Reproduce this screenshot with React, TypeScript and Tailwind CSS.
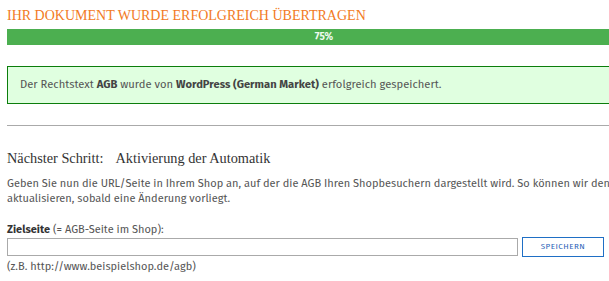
import React from "react";

const sans = "font-['Fira_Sans','Liberation_Sans',Arial,sans-serif]";
const slab = "font-['Liberation_Serif','DejaVu_Serif',serif]";

const App = () => {
  return (
    <div className={`w-[609px] h-[281px] overflow-hidden bg-white ${sans} text-[#555]`}>
      <div className="ml-[7px] w-[634px]">
        <h1 className={`${slab} pt-[8px] text-[14px] leading-[16px] text-[#f27a24]`}>
          IHR DOKUMENT WURDE ERFOLGREICH ÜBERTRAGEN
        </h1>
        <div className="mt-[5px] h-[16px] bg-[#4caf50] flex items-center justify-center">
          <span className="text-[10px] font-bold text-[#eefaee]">75%</span>
        </div>
        <div className="mt-[21px] h-[38px] border border-[#0b7d0b] bg-[#e0ffe0] flex items-center pl-[12px] text-[11.2px] text-[#555]">
          <span>
            Der Rechtstext <b className="text-[#444]">AGB</b> wurde von{" "}
            <b className="text-[#444]">WordPress (German Market)</b> erfolgreich gespeichert.
          </span>
        </div>
        <hr className="mt-[21px] border-0 border-t border-[#aaa]" />
        <h2 className={`${slab} mt-[24px] text-[14.3px] leading-[16px] text-[#333] flex gap-[12px]`}>
          <span>Nächster Schritt:</span>
          <span>Aktivierung der Automatik</span>
        </h2>
        <p className="mt-[10px] text-[11px] leading-[15px] text-[#555]">
          Geben Sie nun die URL/Seite in Ihrem Shop an, auf der die AGB Ihren Shopbesuchern dargestellt wird. So
          können wir den
          <br />
          aktualisieren, sobald eine Änderung vorliegt.
        </p>
        <label className="block mt-[16px] text-[11px] leading-[15px]">
          <b className="text-[#333]">Zielseite</b> (= AGB-Seite im Shop):
        </label>
        <div className="flex items-center gap-[4px]">
          <input
            type="text"
            className="w-[511px] h-[18px] border border-[#aaa] bg-white outline-none"
          />
          <button className="w-[82px] h-[20px] border border-[#1f6fc5] bg-white text-[8px] tracking-[0.5px] text-[#2a63b8]">
            SPEICHERN
          </button>
        </div>
        <div className="mt-[2px] text-[11px] leading-[15px]">(z.B. http://www.beispielshop.de/agb)</div>
      </div>
    </div>
  );
};

export default App;
